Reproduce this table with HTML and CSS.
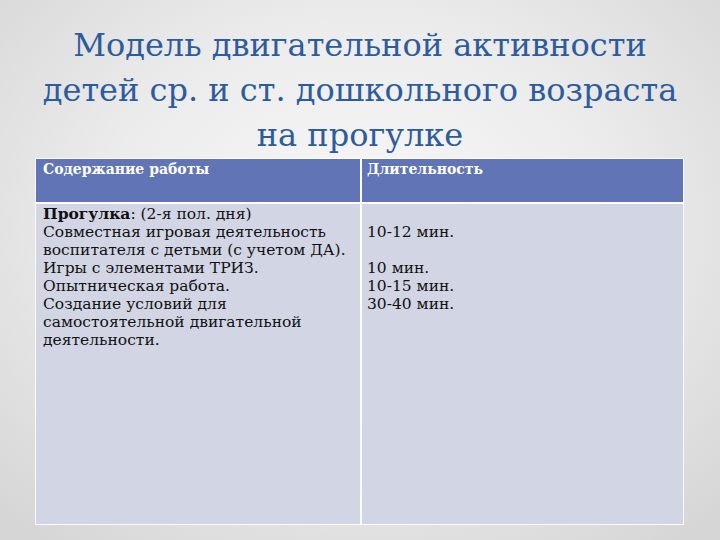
FILE: index.html
```html
<!DOCTYPE html>
<html lang="ru">
<head>
<meta charset="utf-8">
<title>Модель двигательной активности</title>
<link rel="stylesheet" href="styles.css">
</head>
<body>
<div class="slide">
  <h1 class="title">Модель двигательной активности детей ср. и ст. дошкольного возраста на прогулке</h1>
  <div class="table">
    <div class="cell head">Содержание работы</div>
    <div class="cell head right">Длительность</div>
    <div class="cell body">
      <b>Прогулка</b>: (2-я пол. дня)<br>
      Совместная игровая деятельность воспитателя с детьми (с учетом ДА).<br>
      Игры с элементами ТРИЗ.<br>
      Опытническая работа.<br>
      Создание условий для самостоятельной двигательной деятельности.
    </div>
    <div class="cell body right">
      <br>
      10-12 мин.<br>
      <br>
      10 мин.<br>
      10-15 мин.<br>
      30-40 мин.
    </div>
  </div>
</div>
</body>
</html>
```
FILE: styles.css
```css
html, body {
  margin: 0;
  padding: 0;
}
.slide {
  width: 720px;
  height: 540px;
  overflow: hidden;
  background: radial-gradient(ellipse 70% 75% at 50% 42%, #f8f8f8 0%, #ececec 50%, #d6d6d6 100%);
  display: flex;
  flex-direction: column;
  align-items: flex-start;
}
.title {
  margin: 23px 0 0 0;
  width: 720px;
  text-align: center;
  font-family: "DejaVu Serif", serif;
  font-weight: normal;
  font-size: 32px;
  line-height: 45px;
  color: #2d5c9d;
  padding: 0 40px;
  box-sizing: border-box;
}
.table {
  margin: 0 0 0 35px;
  display: grid;
  grid-template-columns: 324px 321px;
  grid-template-rows: 43px 320px;
  gap: 2px;
  padding: 1px;
  background: rgba(255, 255, 255, 0.85);
}
.cell {
  font-family: "DejaVu Serif", serif;
  padding: 1px 4px 0 7px;
}
.cell.right {
  padding-left: 5px;
}
.head {
  background: #6175b6;
  color: #ffffff;
  font-weight: bold;
  font-size: 14px;
  line-height: 18px;
}
.body {
  background: #d1d5e4;
  color: #111111;
  font-size: 15.5px;
  line-height: 18px;
}
```
